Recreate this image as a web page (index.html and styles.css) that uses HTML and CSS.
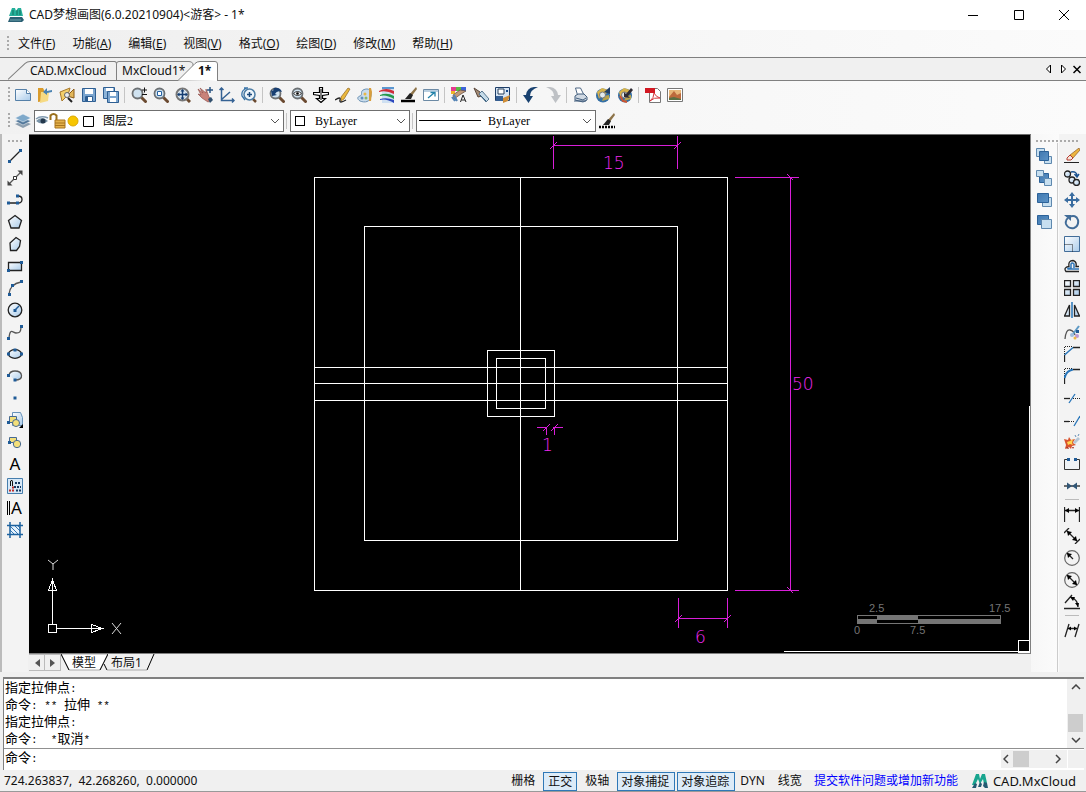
FILE: index.html
```html
<!DOCTYPE html>
<html lang="zh-CN">
<head>
<meta charset="utf-8">
<title>CAD梦想画图</title>
<link rel="stylesheet" href="styles.css">
</head>
<body>
<svg class="defs" aria-hidden="true">
  <defs>
    <linearGradient id="sky" x1="0" y1="0" x2="1" y2="1"><stop offset="0" stop-color="#fff"/><stop offset="1" stop-color="#a9cbea"/></linearGradient>
    <linearGradient id="steel" x1="0" y1="0" x2="1" y2="1"><stop offset="0" stop-color="#4179b0"/><stop offset="1" stop-color="#5c93c7"/></linearGradient>
    <symbol id="mag" viewBox="0 0 16 16"><path d="M10.500 10.500L14.500 14.500" stroke="#6b4a30" stroke-width="3" stroke-linecap="round"/><circle cx="6.500" cy="6.500" r="5" fill="#cfe2f0" stroke="#6d7174" stroke-width="1.800"/></symbol>
    <symbol id="logo" viewBox="0 0 16 16"><path d="M4 1h3l1 5 2-5h3l2 9-3 1-1-5-3 5-2-5-3 6-3 0z" fill="#18a58f"/><path d="M0 15l3-5 2 1-1 4zM6 14l2-5 2 2-1 3zM11 13l1-4 3 1 1 5h-3z" fill="#245a72"/></symbol>
    <symbol id="applogo" viewBox="0 0 16 16"><path d="M4 1h3l1 3 2-3h3l2 8H1z" fill="#25b09b"/><path d="M5 3v5M9 3v5M12 3v5" stroke="#12705f"/><path d="M0 15l2-5h12l2 3-2 2z" fill="#2b6074"/><path d="M2 13h11" stroke="#6fa3ad"/></symbol>
    <symbol id="chev" viewBox="0 0 10 6"><path d="M1 1l4 4 4-4" fill="none" stroke="#555"/></symbol>
    <symbol id="brush" viewBox="0 0 16 16"><path d="M15 0L8 8l2 2L16 2z" fill="#8d7348"/><path d="M9 6l-5 6h6l2-4z" fill="#222"/><path d="M0 14h14" stroke="#000" stroke-width="2.500"/></symbol>
    <symbol id="dashbrush" viewBox="0 0 16 16"><path d="M15 0L8 8l2 2L16 2z" fill="#8d7348"/><path d="M9 6l-5 6h6l2-4z" fill="#222"/><path d="M0 14h16" stroke="#000" stroke-width="2.500" stroke-dasharray="2 1"/></symbol>
    <symbol id="earth" viewBox="0 0 16 16"><circle cx="8" cy="8.500" r="7" fill="#346fa5"/><path d="M2 5l5-4 6 2-2 4-5 1-2 4z" fill="#d7b34a"/><path d="M7 14l2-5 5-1 0 4z" fill="#b8a34b"/><circle cx="7.500" cy="8" r="3" fill="#e3ebee" stroke="#777"/></symbol>
  </defs>
</svg>

<header class="titlebar">
  <svg class="ic"><use href="#applogo"/></svg>
  <h1>CAD梦想画图(6.0.20210904)&lt;游客&gt; - 1*</h1>
  <div class="winbtns">
    <button aria-label="最小化"><svg viewBox="0 0 12 12"><path d="M1 6.500h10"/></svg></button>
    <button aria-label="最大化"><svg viewBox="0 0 12 12"><path d="M1.500 1.500h9v9h-9z"/></svg></button>
    <button aria-label="关闭"><svg viewBox="0 0 12 12"><path d="M1 1l10 10M11 1L1 11"/></svg></button>
  </div>
</header>

<nav class="menubar">
  <span class="grip"></span>
  <button>文件(<u>F</u>)</button><button>功能(<u>A</u>)</button><button>编辑(<u>E</u>)</button><button>视图(<u>V</u>)</button><button>格式(<u>O</u>)</button><button>绘图(<u>D</u>)</button><button>修改(<u>M</u>)</button><button>帮助(<u>H</u>)</button>
</nav>

<div class="doctabs">
  <button class="tab first"><svg viewBox="0 0 108 20" preserveAspectRatio="none"><path d="M0 19.500L17 2.500Q19 .5 22 .5H105.500Q107.500 .5 107.500 3V20"/></svg><span>CAD.MxCloud</span></button>
  <button class="tab second"><svg viewBox="0 0 78 20" preserveAspectRatio="none"><path d="M.5 20V3Q.5 .5 3 .5H73Q76 .5 77 3V20"/></svg><span>MxCloud1*</span></button>
  <button class="tab active"><svg viewBox="0 0 40 20" preserveAspectRatio="none"><path d="M0 19.500L17 2.500Q19 .5 22 .5H37Q39.500 .5 39.500 3V20"/></svg><span>1*</span></button>
  <div class="tabnav">
    <button aria-label="上一个"><svg viewBox="0 0 8 10"><path d="M5.500 1v8l-4-4z" fill="#fff" stroke="#000"/></svg></button>
    <button aria-label="下一个"><svg viewBox="0 0 8 10"><path d="M2.500 1v8l4-4z" fill="#fff" stroke="#000"/></svg></button>
    <button aria-label="关闭标签"><svg viewBox="0 0 8 10"><path d="M.5 2l7 7M7.500 2l-7 7" stroke="#000" stroke-width="1.500"/></svg></button>
  </div>
</div>

<div class="toolbar">
  <span class="grip"></span>
  <button aria-label="新建"><svg class="ic" viewBox="0 0 16 16"><path d="M.5 2.500h11l4 4v7H.5z" fill="url(#sky)" stroke="#5580a8"/><path d="M11.500 2.500v4h4" fill="#fff" stroke="#5580a8"/></svg></button>
  <button aria-label="打开"><svg class="ic" viewBox="0 0 16 16"><path d="M1 1h5l1 2v11l-6 1z" fill="#d99b2b"/><path d="M4 5l8 0-1 9-8 2z" fill="#f6da83"/><path d="M15 3l-5 1V1L6 5l4 3V6l5-1z" fill="#4b83b1"/></svg></button>
  <button aria-label="打开云图"><svg class="ic" viewBox="0 0 16 16"><path d="M1 5l10-4-2 7-6 6z" fill="#f3cf6b" stroke="#a8782a"/><path d="M8 9l7-7v9z" fill="#e2b75b" stroke="#8b5b19"/><circle cx="8" cy="8" r="2.500" fill="#eee" stroke="#666"/><path d="M9 11l4 4" stroke="#222" stroke-width="2"/></svg></button>
  <button aria-label="保存"><svg class="ic" viewBox="0 0 16 16"><path d="M1.500 1.500h13v13h-13z" fill="#7ba5cf" stroke="#2e5f93"/><path d="M4 2h8v5H4z" fill="#fff"/><path d="M4.500 9.500h7v5h-7z" fill="#fff" stroke="#2e5f93"/><path d="M6 10v4" stroke="#2e5f93" stroke-width="2"/></svg></button>
  <button aria-label="另存为"><svg class="ic" viewBox="0 0 16 16"><path d="M.5.5h11v11H.5z" fill="#8cb3d8" stroke="#2e5f93"/><path d="M3 1h7v3H3z" fill="#fff"/><path d="M4.500 4.500h11v11h-11z" fill="#7ba5cf" stroke="#2e5f93"/><path d="M7 5h6v4H7zM7 11h6v4H7z" fill="#fff"/></svg></button>
  <span class="sep"></span>
  <button aria-label="实时缩放"><svg class="ic" viewBox="0 0 16 16"><use href="#mag"/><path d="M11 3h5M13.500.5v5M11 7.500h5" stroke="#111"/></svg></button>
  <button aria-label="窗口缩放"><svg class="ic" viewBox="0 0 16 16"><use href="#mag"/><path d="M4.500 4.500h4v4h-4z" fill="#fff" stroke="#2763a2"/></svg></button>
  <button aria-label="范围缩放"><svg class="ic" viewBox="0 0 16 16"><path d="M11 11l4 4" stroke="#6b4a30" stroke-width="3"/><circle cx="7.500" cy="7.500" r="6" fill="#dce9f3" stroke="#777" stroke-width="2"/><path d="M3 7.500h9M7.500 3v9" stroke="#163e72" stroke-width="1.500"/><path d="M7.500 2l2 2.500h-4zM7.500 13l2-2.500h-4zM2 7.500l2.500-2v4zM13 7.500l-2.500-2v4z" fill="#163e72"/></svg></button>
  <button aria-label="平移"><svg class="ic" viewBox="0 0 16 16"><path d="M1 2l5 4-3-5 6 5V2l3 8 3 3-4 2-6-4-4-4 3 1z" fill="#c98279" stroke="#93534e" stroke-width=".7"/><path d="M10 3h6M13 0v6" stroke="#2b5583" stroke-width="1.500"/><path d="M11 12l3-2 2 3-3 3z" fill="#32506e"/></svg></button>
  <button aria-label="坐标系"><svg class="ic" viewBox="0 0 16 16"><path d="M2.500 1v12.500H15M2 13L11 5M.5 3l2-2 2 2M13 11.500l2 2-2 2" fill="none" stroke="#356294" stroke-width="1.500"/></svg></button>
  <button aria-label="放大"><svg class="ic" viewBox="0 0 16 16"><path d="M6 1Q0 3 1 9l3 4M3 1h4" stroke="#3773a8" fill="none" stroke-width="1.300"/><path d="M12 12l3 3" stroke="#6b4a30" stroke-width="2.500"/><circle cx="8.500" cy="7.500" r="5.500" fill="#edf5fb" stroke="#4d7da5" stroke-width="1.500"/><path d="M6 7.500h5M8.500 5v5" stroke="#1b4a7d" stroke-width="1.500"/></svg></button>
  <span class="sep"></span>
  <button aria-label="上一视图"><svg class="ic" viewBox="0 0 16 16"><use href="#mag"/><path d="M2 3l1 6 5-1-2-1q2-4 7-2-2-5-8-4L4 4z" fill="#183f72"/></svg></button>
  <button aria-label="查看"><svg class="ic" viewBox="0 0 16 16"><use href="#mag"/><path d="M2.500 6.500q4-4 8 0-4 4-8 0z" fill="#fff" stroke="#333"/><circle cx="6.500" cy="6.500" r="1.300"/></svg></button>
  <button aria-label="移动视图"><svg class="ic" viewBox="0 0 16 16"><path d="M6.500.500h3v5h6v2l-6 1v3h3L8 15.500l-4.500-4h3v-3l-6-1v-2h6z" fill="#fff" stroke="#000" stroke-width="1.200"/><path d="M8 2v11" stroke="#000"/></svg></button>
  <button aria-label="画笔"><svg class="ic" viewBox="0 0 16 16"><path d="M13 1l2 1-6 10-3 2 0-4z" fill="#eab83d" stroke="#8f6624" stroke-width=".7"/><path d="M0 13q6-4 5 0t6 0" fill="none" stroke="#222" stroke-width="1.300"/></svg></button>
  <button aria-label="调色板"><svg class="ic" viewBox="0 0 16 16"><path d="M6 3c6-3 9 1 8 6-1 6-6 7-11 5-3-2-3-4 0-5s0-4 3-6z" fill="#c9dcec" stroke="#6d93b5"/><circle cx="5" cy="11" r="1.500" fill="#5f8ec0"/><circle cx="8" cy="7" r="1.500" fill="#e9b746"/><circle cx="9" cy="11" r="1.500" fill="#8ab867"/><path d="M12 1h2l1 4-1 9h-2z" fill="#d89e3d"/></svg></button>
  <button aria-label="颜色"><svg class="ic" viewBox="0 0 16 16"><path d="M3 0h12v16H3z" fill="#cfe0f2"/><path d="M0 4q7-4 15 0v3Q7 3 0 5z" fill="#cf2d39"/><path d="M1 8q7-3 14 1v3Q7 7 1 9z" fill="#24984b"/><path d="M1 12q7-2 14 1v3Q7 11 1 13z" fill="#2b46bd"/><path d="M3 0h12v2H3z" fill="#5b97d0"/></svg></button>
  <button aria-label="线型"><svg class="ic"><use href="#brush"/></svg></button>
  <button aria-label="外部参照"><svg class="ic" viewBox="0 0 16 16"><path d="M.5 2.500h15v11H.5z" fill="#fff" stroke="#6c8aa5"/><path d="M1 3h14v2H1z" fill="#b9cfe1"/><path d="M5 11l6-5M7.500 5.500H12v4" stroke="#2282aa" stroke-width="1.300" fill="none"/></svg></button>
  <span class="sep"></span>
  <button aria-label="特性"><svg class="ic" viewBox="0 0 16 16"><path d="M0 0h5v4H0z" fill="#e43b8f"/><path d="M5 0h5v4H5z" fill="#57bd42"/><path d="M10 0h5v4h-5z" fill="#3b63d9"/><path d="M0 4h4v3H0z" fill="#efb528"/><path d="M2 8l7-5 6 1-5 3-7 5z" fill="#c19a79" stroke="#5d4a40" stroke-width=".7"/><path d="M1 10l3 4M3 8l3 6" stroke="#5383b5" stroke-width="2"/><path d="M9.500 15L12 8l3 7M10.500 13h3.500" fill="none" stroke="#222"/></svg></button>
  <button aria-label="测量"><svg class="ic" viewBox="0 0 16 16"><path d="M1 1l6 4 2 4-4 1z" fill="#a28b76" stroke="#594639"/><path d="M6 7l3-3 7 8-3 3z" fill="#c6dbe8" stroke="#55758f"/><path d="M7 8l6 6" stroke="#345c7d"/></svg></button>
  <button aria-label="块"><svg class="ic" viewBox="0 0 16 16"><path d="M.5.500h14v13H.5z" fill="#d6e5f4" stroke="#1e3e68"/><path d="M3 2h6v5H3z" fill="#fff" stroke="#29415c"/><path d="M11 3h2v2h-2z" fill="#154889"/><path d="M1 9h7v5H1z" fill="#355f93"/><path d="M8 11l7-3-2 6-5 2z" fill="#cf8e38"/></svg></button>
  <span class="sep"></span>
  <button aria-label="撤销"><svg class="ic" viewBox="0 0 16 16"><path d="M15 0Q4-1 3 8H0l5.500 8L10 9H7q0-6 8-9z" fill="#194270"/></svg></button>
  <button aria-label="重做"><svg class="ic" viewBox="0 0 16 16"><path d="M1 0q11-1 12 8h3l-5.500 8L6 9h3Q9 3 1 0z" fill="#bec1c5"/></svg></button>
  <span class="sep"></span>
  <button aria-label="打印"><svg class="ic" viewBox="0 0 16 16"><path d="M4.500 8l-2-7h5l3 6" fill="#fff" stroke="#4e6784"/><path d="M2 9l3-2h6l3 3v3l-4 2-8-2z" fill="#d0d9e3" stroke="#415d7c"/><path d="M3 11l7 2 3-2M1 14h12" fill="none" stroke="#415d7c"/></svg></button>
  <button aria-label="上传"><svg class="ic" viewBox="0 0 16 16"><use href="#earth"/><path d="M9 5l6-5v7z" fill="#203e66"/></svg></button>
  <button aria-label="下载"><svg class="ic" viewBox="0 0 16 16"><use href="#earth"/><path d="M7 10V5l2 2 5-6 2 2-5 6 2 2z" fill="#302c35"/><path d="M3 9l3 5 4 1" stroke="#ce5430" stroke-width="2" fill="none"/></svg></button>
  <span class="sep"></span>
  <button aria-label="输出 PDF"><svg class="ic" viewBox="0 0 16 16"><path d="M4.500 1.500h8l3 3v11h-11z" fill="#fff" stroke="#777"/><path d="M0 1h10v5H0z" fill="#d21822"/><path d="M9 6q0 5-4 8 4-4 10-3-4-1-6-5" fill="none" stroke="#d5353c"/></svg></button>
  <button aria-label="输出图片"><svg class="ic" viewBox="0 0 16 16"><path d="M.5 1.500h15v13H.5z" fill="#fff" stroke="#777"/><path d="M2 3h12v10H2z" fill="#e8b779"/><path d="M2 10l5-6 3 4 4-2v7H2z" fill="#bd6a3c"/><path d="M2 11l5-1 7 2v1H2z" fill="#5b7042"/></svg></button>
</div>

<div class="toolbar props">
  <span class="grip"></span>
  <button aria-label="图层"><svg class="ic" viewBox="0 0 16 16"><path d="M0 11l8-3 8 3-8 4z" fill="#8a9dae"/><path d="M0 8l8-3 8 3-8 4z" fill="#52789b" stroke="#fff" stroke-width=".5"/><path d="M0 5l8-4 8 4-8 4z" fill="#7fa9ca" stroke="#fff" stroke-width=".5"/></svg></button>
  <div class="combo layer">
    <svg class="state" viewBox="0 0 60 16"><path d="M1 8q6-6 12 0-6 5-12 0z" fill="#7a94a8"/><circle cx="8" cy="8" r="2.500" fill="#24384c"/><path d="M1 6q5-4 12-1" fill="none" stroke="#829bb0" stroke-width="1.500"/><path d="M15.500 7V2.500q3-3 6 0V7" fill="none" stroke="#9a6f1c" stroke-width="2"/><path d="M20 7h10v8H20z" fill="#e4b14b" stroke="#a8741e"/><path d="M20 10h10M20 12.500h10" stroke="#a8741e"/><circle cx="38" cy="8" r="5" fill="#f7c500" stroke="#dca900"/><path d="M48.500 3.500h10v10h-10z" fill="#fff" stroke="#000"/></svg>
    <select aria-label="图层"><option>图层2</option></select><svg class="chev"><use href="#chev"/></svg>
  </div>
  <span class="sep"></span>
  <div class="combo color"><i class="swatch"></i><select aria-label="颜色"><option>ByLayer</option></select><svg class="chev"><use href="#chev"/></svg></div>
  <span class="sep"></span>
  <div class="combo line"><i class="stroke"></i><select aria-label="线型"><option>ByLayer</option></select><svg class="chev"><use href="#chev"/></svg></div>
  <button aria-label="线宽"><svg class="ic"><use href="#dashbrush"/></svg></button>
</div>

<main class="work">
  <aside class="tools">
    <span class="hgrip"></span>
    <button aria-label="直线"><svg class="ic" viewBox="0 0 16 16"><path d="M2 14L14 2" class="k2"/><path d="M1 12h3v3H1zM12 1h3v3h-3z" class="pt"/></svg></button>
    <button aria-label="构造线"><svg class="ic" viewBox="0 0 16 16"><path d="M2 14L14 2" class="g"/><path d="M15.500.500v5l-5-5zM.5 15.500v-5l5 5z" fill="#444"/><path d="M6.500 6.500h3v3h-3z" fill="#fff" stroke="#333"/></svg></button>
    <button aria-label="多段线"><svg class="ic" viewBox="0 0 16 16"><path d="M1 11h10q4 0 4-3.500T11 4" class="k2"/><path d="M0 9.500h3v3H0zM9 9.500h3v3H9zM9 2.500h3v3H9z" class="pt"/></svg></button>
    <button aria-label="正多边形"><svg class="ic" viewBox="0 0 16 16"><path d="M8 1.500l6.500 5L12 14H4L1.500 6.500z" class="shape"/></svg></button>
    <button aria-label="多边形"><svg class="ic" viewBox="0 0 16 16"><path d="M9 1.500l4.500 3-1 6-3 4h-6L3 7z" class="shape"/></svg></button>
    <button aria-label="矩形"><svg class="ic" viewBox="0 0 16 16"><path d="M1.500 4.500h13v8h-13z" class="shape"/><path d="M0 11h3v3H0zM13 3h3v3h-3z" class="pt"/></svg></button>
    <button aria-label="圆弧"><svg class="ic" viewBox="0 0 16 16"><path d="M2 14Q3 4 14 2" class="k2 g"/><path d="M1 13h3v3H1zM4 4h3v3H4zM13 0h3v3h-3z" class="pt"/></svg></button>
    <button aria-label="圆"><svg class="ic" viewBox="0 0 16 16"><circle cx="8" cy="8" r="6.800" class="shape"/><path d="M8 8l4-4" stroke="#1f5b97" stroke-width="1.500"/><path d="M6.500 7h3v3h-3z" class="pt"/></svg></button>
    <button aria-label="样条曲线"><svg class="ic" viewBox="0 0 16 16"><path d="M2 14C3 3 6 9 9 9s5 0 5-7" class="k2 g"/><path d="M0 13h3v3H0zM13 1h3v3h-3z" class="pt"/></svg></button>
    <button aria-label="椭圆"><svg class="ic" viewBox="0 0 16 16"><ellipse cx="8" cy="8" rx="6.500" ry="4.300" class="shape"/><path d="M0 6.500h3v3H0zM13 6.500h3v3h-3zM6.500 2.500h3v3h-3z" class="pt"/></svg></button>
    <button aria-label="椭圆弧"><svg class="ic" viewBox="0 0 16 16"><path d="M2 7q1-4 6-4 6 0 6.500 4.500T8 12" class="shape soft"/><path d="M0 6h3v3H0zM6.500 10.500h3v3h-3z" class="pt"/></svg></button>
    <button aria-label="点"><svg class="ic" viewBox="0 0 16 16"><path d="M6.500 6.500h3v3h-3z" class="pt"/></svg></button>
    <button aria-label="创建块"><svg class="ic" viewBox="0 0 16 16"><path d="M5.500.5h8l2 5v8h-10z" fill="url(#sky)" stroke="#6792b9"/><path d="M2.500 4.500h7v6h-7z" class="yel"/><circle cx="9" cy="11" r="3.500" class="yel"/><path d="M0 9h3v3H0z" class="pt"/><path d="M16 12v4h-4z"/></svg></button>
    <button aria-label="插入块"><svg class="ic" viewBox="0 0 16 16"><path d="M2.500 3.500h7v5h-7z" class="yel"/><circle cx="10" cy="10" r="3.700" class="yel"/><path d="M1 7h3v3H1z" class="pt"/></svg></button>
    <button class="letter" aria-label="单行文字">A</button>
    <button aria-label="表格"><svg class="ic" viewBox="0 0 16 16"><path d="M.5.500h15v15H.5z" fill="#d7e8f7" stroke="#477ead"/><path d="M3.500 8V3q2-2 2 1v4" fill="none" stroke="#111"/><path d="M8 5h5M7 9h7M9 12.500h5" stroke="#173a64" stroke-width="2" stroke-dasharray="2 1"/><path d="M2 12.500h6M5 9.500h3" stroke="#c42c29" stroke-width="2" stroke-dasharray="2 1"/></svg></button>
    <button class="letter mtext" aria-label="多行文字">A</button>
    <button aria-label="填充"><svg class="ic" viewBox="0 0 16 16"><path d="M3 3h10v10H3z" fill="#e6f2fc"/><path d="M3 4l9 9M3 8l5 5M7 3l6 6M3 12l1 1M10 3l3 3" stroke="#3478b5"/><path d="M0 3.500h16M0 12.500h16M3 0v16M13 0v16" stroke="#1c629f" stroke-width="1.500"/></svg></button>
  </aside>

  <section class="center">
    <svg class="drawing" viewBox="29 135 1001 518" role="img" aria-label="图纸">
      <g class="ln">
        <path d="M314.500 177.500h413v413h-413zM364.500 226.500h313v314h-313zM487.500 350.500h67v66h-67zM496.500 358.500h49v50h-49zM520.500 177v413M314 367.500h413M314 383.500h413M314 400.500h413M784 651.500h246M1029.500 406v247M1018.500 640.500h11v12h-11z"/>
        <path d="M48.500 624.500h8v8h-8zM52.500 624V579M57 628.500h45M48.500 590.500h8l-4-11zM91.500 624.500v8l11-4z"/>
      </g>
      <path class="axis" d="M48 560l5 4 5-4M53 564v6M112 623l9 11M121 623l-9 11"/>
      <path class="dim" d="M553.500 136v33M677.500 136v33M553 145.500h124M735 177.500h64M735 590.500h64M790.500 177v413M678.500 598v30M727.500 598v30M678 618.500h50M537 427.500h10M553 427.500h10M546.500 427v8M554.500 427v8"/>
      <path class="tick" d="M550 149l7-7M674 149l7-7M787 174l6 6M787 587l6 6M675 622l7-7M724 622l7-7M543 431l7-7M551 431l7-7"/>
      <g class="dimtext"><text x="603" y="169">15</text><text x="792" y="390">50</text><text x="695" y="643">6</text><text x="542" y="451">1</text></g>
      <path class="bar" d="M857 615h144v9H857z"/><path d="M858 616h19v3h-19zM918 616h82v3h-82zM877 620h41v3h-41z"/>
      <g class="scale"><text x="869" y="612">2.5</text><text x="989" y="612">17.5</text><text x="854" y="634">0</text><text x="910" y="634">7.5</text></g>
    </svg>
    <div class="sheets">
      <button class="arrow" aria-label="左"><svg viewBox="0 0 8 10"><path d="M7 1v8L2 5z"/></svg></button><button class="arrow" aria-label="右"><svg viewBox="0 0 8 10"><path d="M1 1v8l5-4z"/></svg></button>
      <button class="sheet on"><svg viewBox="0 0 47 17" preserveAspectRatio="none"><path class="fill" d="M0 0l8 16h31L47 0z"/><path d="M0 0l8 16M39 16L47 0"/></svg><span>模型</span></button>
      <button class="sheet"><svg viewBox="0 0 53 17" preserveAspectRatio="none"><path d="M3 10l3 6M46 16L53 0"/><path class="base" d="M6 16h40"/></svg><span>布局1</span></button>
    </div>
  </section>

  <aside class="right">
    <span class="hgrip"></span>
    <div class="cols">
      <div class="col order">
        <button aria-label="前置"><svg class="ic" viewBox="0 0 16 16"><path d="M.5.5h8v8h-8zM8.500 8.500h7v7h-7z" class="pale"/><path d="M3.500 3.500h9v9h-9z" class="deep"/></svg></button>
        <button aria-label="置于对象上"><svg class="ic" viewBox="0 0 16 16"><path d="M3.500 3.500h9v9h-9z" class="deep"/><path d="M.5.5h7v6h-7zM8.500 8.500h7v7h-7z" class="pale"/></svg></button>
        <button aria-label="置于对象下"><svg class="ic" viewBox="0 0 16 16"><path d="M6.500 5.500h9v9h-9z" class="pale"/><path d="M1.500 1.500h11v9h-11z" class="deep"/></svg></button>
        <button aria-label="后置"><svg class="ic" viewBox="0 0 16 16"><path d="M1.500 1.500h11v9h-11z" class="deep"/><path d="M5.500 5.500h10v9h-10z" class="pale"/></svg></button>
      </div>
      <div class="col edit">
        <button aria-label="删除"><svg class="ic" viewBox="0 0 16 16"><path d="M15 0l1 2-7 8-3-3z" fill="#edb43f" stroke="#8a5a25" stroke-width=".7"/><path d="M6 7l3 3-2 2H3v-2z" fill="#f3e6dc" stroke="#b73c31"/><path d="M0 14.500h15" stroke="#222"/></svg></button>
        <button aria-label="复制"><svg class="ic" viewBox="0 0 16 16"><g class="shape"><circle cx="3.500" cy="4" r="3"/><circle cx="8" cy="10" r="3"/><circle cx="12.500" cy="12.500" r="3"/></g><path d="M7 2q6-1 6 4M10.500 4l2.500 3 2-3" fill="none" stroke="#1c5390" stroke-width="1.500"/></svg></button>
        <button aria-label="移动"><svg class="ic" viewBox="0 0 16 16"><path d="M8 0l3 4H9v3h3V5l4 3-4 3V9H9v3h2l-3 4-3-4h2V9H4v2L0 8l4-3v2h3V4H5z" fill="#386ca0"/></svg></button>
        <button aria-label="旋转"><svg class="ic" viewBox="0 0 16 16"><path d="M5 3q7-3 9 3 1 6-4 8-6 1-8-4-1-4 2-6" fill="none" stroke="#416c98" stroke-width="2"/><path d="M0 1h7v6z" fill="#416c98"/></svg></button>
        <button aria-label="缩放"><svg class="ic" viewBox="0 0 16 16"><path d="M.5.500h15v15H.5z" fill="url(#sky)" stroke="#426d99"/><path d="M.5 8.500h8v7" class="dash"/></svg></button>
        <button aria-label="偏移"><svg class="ic" viewBox="0 0 16 16"><path d="M15 13.500H2q-3-4 3-5-1-6 4-6 4 1 3 6h3" class="k2"/><path d="M15 11H4q-1-1 3-1V6q1-2 3 0v4" fill="none" stroke="#2f76b8" stroke-width="1.500"/></svg></button>
        <button aria-label="阵列"><svg class="ic" viewBox="0 0 16 16"><path d="M.5.500h6v6h-6zM9.500.500h6v6h-6zM.5 9.500h6v6h-6zM9.500 9.500h6v6h-6z" class="shape"/></svg></button>
        <button aria-label="镜像"><svg class="ic" viewBox="0 0 16 16"><path d="M5.500 3v11h-5zM10.500 3v11h5z" class="shape"/><path d="M8 0v16" stroke="#2475b7" stroke-width="1.500"/></svg></button>
        <button aria-label="编辑曲线"><svg class="ic" viewBox="0 0 16 16"><path d="M1 15Q2 5 6 6t5 5" class="k2 g"/><path d="M15 2l-6 8" stroke="#5e9ac5" stroke-width="2"/><path d="M12 6h3v3h-3z" class="pt"/><circle cx="8" cy="11" r="2" fill="#9fbede"/><circle cx="13" cy="12" r="2" fill="#bd9ad5"/><circle cx="11" cy="14" r="1.500" fill="#ecb948"/></svg></button>
        <button aria-label="倒角"><svg class="ic" viewBox="0 0 16 16"><path d="M.5 8V.5H9" class="dash"/><path d="M.5 16V9M9 1.500h7" class="k2"/><path d="M.5 9L9 1.500" stroke="#2775b9" stroke-width="1.500"/></svg></button>
        <button aria-label="圆角"><svg class="ic" viewBox="0 0 16 16"><path d="M.5 8V.5H9" class="dash"/><path d="M.5 16V9M9 1.500h7" class="k2"/><path d="M.5 10Q2 3 9 1.500" fill="none" stroke="#2775b9" stroke-width="2"/></svg></button>
        <button aria-label="修剪"><svg class="ic" viewBox="0 0 16 16"><path d="M0 8.500h6" class="k2"/><path d="M9 8.500h7" class="dash"/><path d="M5 13l6-9" stroke="#2775b9" stroke-width="1.300"/></svg></button>
        <button aria-label="延伸"><svg class="ic" viewBox="0 0 16 16"><path d="M0 9.500h5" class="k2"/><path d="M5 9.500h6" class="dash"/><path d="M10 14l6-10" stroke="#2775b9" stroke-width="1.300"/></svg></button>
        <button aria-label="分解"><svg class="ic" viewBox="0 0 16 16"><path d="M0 5l4 1 1-3 2 3 4-1-2 4 3 2-4 1-1 3-2-2-4 2 1-4z" fill="#d9532e"/><path d="M3 8l3-1 3-2-1 4 1 2-3-1-2 1z" fill="#ffd44f"/><path d="M9 8l5-5 2 2-5 5z" fill="#b4c6d5"/><path d="M1 14l3-1 1 2zM8 13l2 0-1 2z" fill="#a32a1c"/><path d="M11 1l1 2M15 0l-1 2" stroke="#648eb5"/></svg></button>
        <button aria-label="打断"><svg class="ic" viewBox="0 0 16 16"><path d="M4 3.500H.5v10h15v-10H12" fill="#eef2f5" stroke="#333"/><path d="M3 2h3v3H3zM10 2h3v3h-3z" class="pt"/></svg></button>
        <button aria-label="合并"><svg class="ic" viewBox="0 0 16 16"><path d="M0 8h16" class="k2"/><path d="M3 4.500L8 8l-5 3.500zM13 4.500L8 8l5 3.500z" fill="#315676"/></svg></button>
        <span class="hsep"></span>
        <button aria-label="线性标注"><svg class="ic" viewBox="0 0 16 16"><path d="M.5 1v15M15.500 1v15M1 4.500h14" class="k2"/><path d="M1 4.500l4-2.500v5zM15 4.500l-4-2.500v5z"/></svg></button>
        <button aria-label="对齐标注"><svg class="ic" viewBox="0 0 16 16"><path d="M0 5l5-5M11 16l5-5M3 3l10 10" class="k2"/><path d="M3 3l5 1-4 4zM13 13l-5-1 4-4z"/></svg></button>
        <button aria-label="半径标注"><svg class="ic" viewBox="0 0 16 16"><circle cx="8" cy="8" r="7.300" class="ring"/><path d="M3 3l6 6" class="k2"/><path d="M3 3l5 1-4 4z"/></svg></button>
        <button aria-label="直径标注"><svg class="ic" viewBox="0 0 16 16"><circle cx="8" cy="8" r="7.300" class="ring"/><path d="M3 3l10 10" class="k2"/><path d="M3 3l5 1-4 4zM13 13l-5-1 4-4z"/></svg></button>
        <button aria-label="角度标注"><svg class="ic" viewBox="0 0 16 16"><path d="M0 14.500h16M1 9l7-8M7 3q7 3 7 10" class="k2"/><path d="M6 3l5 0-2 4zM14 13l-3-4h4z"/></svg></button>
        <span class="hsep"></span>
        <button aria-label="编辑标注"><svg class="ic" viewBox="0 0 16 16"><path d="M1 15L5 2M11 15l4-13M4 6.500h9" class="k2"/><path d="M4 6.500l3-2v4zM13 6.500l-3-2v4z"/></svg></button>
      </div>
    </div>
  </aside>
</main>

<section class="command">
  <div class="history">
    <div class="log">
      <p>指定拉伸点<i>:</i></p><p>命令<i>: ** </i>拉伸<i> **</i></p><p>指定拉伸点<i>:</i></p><p>命令<i>:  *</i>取消<i>*</i></p>
    </div>
    <div class="vscroll"><svg viewBox="0 0 10 6"><path d="M1 5l4-4 4 4"/></svg><span></span><svg viewBox="0 0 10 6"><path d="M1 1l4 4 4-4"/></svg></div>
  </div>
  <div class="prompt">
    <label for="cmd">命令<i>:</i></label><input id="cmd" type="text">
    <div class="hscroll"><svg viewBox="0 0 6 10"><path d="M5 1L1 5l4 4"/></svg><span></span><svg viewBox="0 0 6 10"><path d="M1 1l4 4-4 4"/></svg></div>
    <div class="corner"></div>
  </div>
</section>

<footer class="status">
  <output>724.263837,  42.268260,  0.000000</output>
  <button>栅格</button><button class="on">正交</button><button>极轴</button><button class="on wide">对象捕捉</button><button class="on wide">对象追踪</button><button class="dyn">DYN</button><button class="lw">线宽</button>
  <a href="#">提交软件问题或增加新功能</a>
  <svg class="ic"><use href="#logo"/></svg><strong>CAD.MxCloud</strong>
</footer>
</body>
</html>
```
FILE: styles.css
```css
* { box-sizing: border-box; }
html, body { height: 100%; margin: 0; }
body {
  display: flex; flex-direction: column; overflow: hidden;
  background: #f0f0f0; color: #111;
  font: 12px/16px "Noto Sans", "Noto Sans CJK SC", sans-serif;
}
button { margin: 0; padding: 0; border: 0; background: none; color: inherit; font: inherit; }
i { font-style: normal; }
svg { display: block; flex: none; }
.defs { position: absolute; width: 0; height: 0; }
.ic { width: 16px; height: 16px; }
.grip { width: 3px; height: 16px; margin: 0 1px 0 8px; flex: none; background: repeating-linear-gradient(#aaa 0 2px, transparent 2px 4px) 0 0 / 2px 100% no-repeat; }
.hgrip { height: 2px; flex: none; background: repeating-linear-gradient(90deg, #aaa 0 2px, transparent 2px 4px); }

.titlebar { display: flex; align-items: center; height: 30px; flex: none; background: #fff; padding-left: 8px; gap: 5px; }
.titlebar h1 { margin: 0; font-size: 12px; font-weight: 400; flex: 1; }
.winbtns { display: flex; }
.winbtns button { width: 46px; height: 30px; display: grid; place-items: center; }
.winbtns button:last-child { width: 44px; }
.winbtns svg { width: 12px; height: 12px; fill: none; stroke: #000; }

.menubar { display: flex; align-items: center; height: 27px; flex: none; background: linear-gradient(90deg, #efefef, #fbfbfb); }
.menubar button { padding: 0 8px; margin-right: 1px; }
.menubar .grip { margin: 0 0 0 7px; }

.doctabs { display: flex; align-items: flex-end; height: 24px; flex: none; border-top: 1px solid #808080; background: linear-gradient(#808080, #808080) 0 100% / 100% 1px no-repeat #f0f0f0; padding-left: 8px; }
.tab { position: relative; height: 20px; text-align: left; }
.tab svg { position: absolute; inset: 0; width: 100%; height: 100%; fill: #f0f0f0; stroke: #808080; }
.tab span { position: relative; }
.tab.first { width: 109px; padding-left: 22px; }
.tab.second { width: 78px; margin-left: -1px; padding-left: 6px; }
.tab.active { width: 40px; margin-left: -16px; padding-left: 20px; font-weight: 700; }
.tab.first svg, .tab.second svg { border-bottom: 1px solid #808080; }
.tab.active svg { fill: #fff; }
.tabnav { display: flex; margin-left: auto; padding-right: 2px; height: 24px; align-items: center; }
.tabnav button { width: 14px; display: grid; place-items: center; }
.tabnav svg { width: 8px; height: 10px; }

.toolbar { display: flex; align-items: center; height: 28px; flex: none; background: linear-gradient(90deg, #f1f1f1, #fbfbfb); }
.toolbar button { width: 22px; height: 22px; display: grid; place-items: center; flex: none; }
.sep { width: 2px; height: 16px; margin: 0 2px; border-left: 1px solid #c4c4c4; flex: none; }
.props { height: 25px; padding-bottom: 2px; }
.combo { display: flex; align-items: center; position: relative; height: 22px; background: #fff; border: 1px solid #6f6f6f; }
.combo select { flex: 1; min-width: 0; height: 20px; border: 0; background: transparent; appearance: none; color: #000; font: 12px/16px "Liberation Serif", "Noto Sans CJK SC", serif; padding: 0; outline: 0; }
.combo .chev { position: absolute; right: 3px; top: 7px; width: 10px; height: 6px; pointer-events: none; }
.layer { width: 250px; gap: 8px; }
.state { width: 60px; height: 16px; }
.color { width: 120px; padding-left: 4px; gap: 10px; }
.swatch { width: 10px; height: 10px; border: 1px solid #000; }
.line { width: 180px; padding-left: 2px; gap: 7px; }
.stroke { width: 62px; height: 1px; background: #000; }

.work { flex: 1; min-height: 0; display: flex; }
.tools { width: 28px; flex: none; display: flex; flex-direction: column; align-items: center; padding-top: 6px; border-left: 2px solid #bbb; background: #f3f3f3; }
.tools .hgrip { width: 14px; margin-bottom: 3px; }
.tools button, .col button { width: 22px; height: 22px; flex: none; display: grid; place-items: center; }
.tools .letter { font-size: 17px; line-height: 20px; color: #000; }
.tools .mtext { width: 16px; border-left: 3px double #000; height: 14px; margin: 4px 0; line-height: 14px; }
.k2 { fill: none; stroke: #222; stroke-width: 1.3; }
.g { fill: none; stroke: #555; stroke-width: 1.3; }
.pt { fill: #1f5b97; }
.shape { fill: url(#sky); stroke: #222; stroke-width: 1.3; }
.soft { stroke: #555; }
.yel { fill: #f3df79; stroke: #476a92; }
.pale { fill: #c7dff0; stroke: #5e88ae; }
.deep { fill: url(#steel); stroke: #2c6299; }
.dash { fill: none; stroke: #222; stroke-dasharray: 1 1; }
.ring { fill: none; stroke: #666; stroke-width: 1.2; }

.center { flex: 1; min-width: 0; display: flex; flex-direction: column; padding-left: 1px; }
.drawing { flex: 1; min-height: 0; width: 100%; background: #000; border-right: 1px solid #808080; border-top: 1px solid #6c6c6c; border-bottom: 1px solid #808080; }
.ln { fill: none; stroke: #fff; shape-rendering: crispEdges; }
.axis { fill: none; stroke: #ddd; }
.dim { fill: none; stroke: #d81ed8; shape-rendering: crispEdges; }
.tick { stroke: #d81ed8; }
.dimtext { fill: #f028f0; font: 200 17px "DejaVu Sans", sans-serif; }
.bar { fill: #757575; }
.scale { fill: #757575; font: 11px "Liberation Sans", sans-serif; }
.sheets { display: flex; height: 18px; flex: none; }
.sheet { position: relative; height: 17px; text-align: left; }
.sheet svg { position: absolute; inset: 0; width: 100%; height: 100%; fill: none; stroke: #000; }
.sheet .fill { fill: #fff; stroke: #aaa; }
.sheet .base { stroke: #aaa; }
.sheet span { position: relative; }
.sheet.on { width: 47px; padding-left: 11px; }
.sheet + .sheet { width: 53px; margin-left: -7px; padding-left: 10px; }
.sheet + .sheet svg { overflow: visible; }
.arrow { width: 16px; height: 17px; border: 1px solid #bbb; border-left-width: 0; display: grid; place-items: center; }
.arrow svg { width: 8px; height: 10px; fill: #555; }

.right { width: 55px; flex: none; display: flex; flex-direction: column; padding-top: 6px; background: linear-gradient(90deg, #f7f7f7, #fbfbfb 50%, #f3f3f3 52%); }
.right .hgrip { margin: 0 7px 1px 5px; }
.cols { flex: 1; display: flex; }
.col { display: flex; flex-direction: column; align-items: center; padding-top: 2px; }
.order { width: 27px; border-right: 1px solid #ccc; }
.edit { flex: 1; }
.hsep { width: 14px; height: 1px; margin: 2px 0 3px; background: #bbb; }

.command { flex: none; margin: 5px 2px 0 3px; border: solid #808080; border-width: 2px 0 0 1px; background: #fff; color: #000; font: 13px/17px "Noto Sans CJK SC", sans-serif; }
.command i { font: 11px/13px "Liberation Mono", monospace; white-space: pre; }
.history { display: flex; border-bottom: 1px solid #909090; }
.log { flex: 1; padding: 0 1px 1px; line-height: 15px; }
.log p { margin: 0; height: 17px; }
.vscroll { width: 17px; display: flex; flex-direction: column; align-items: center; background: #f0f0f0; padding: 5px 0; }
.vscroll svg { width: 10px; height: 6px; }
.vscroll span { width: 15px; height: 18px; margin: auto 0 5px; background: #cdcdcd; }
.command svg { fill: none; stroke: #444; stroke-width: 1.5; }
.prompt { display: flex; height: 21px; align-items: flex-start; }
.prompt label { padding-left: 1px; line-height: 15px; }
.prompt input { flex: 1; min-width: 0; height: 18px; border: 0; outline: 0; padding: 0 4px; background: transparent; font: inherit; }
.hscroll { width: 66px; height: 18px; margin-top: 1px; display: flex; align-items: center; background: #f0f0f0; padding: 0 6px 0 2px; gap: 4px; }
.hscroll svg { width: 6px; height: 10px; }
.hscroll span { width: 16px; height: 16px; background: #cdcdcd; margin-right: auto; }
.corner { width: 17px; height: 18px; margin-top: 1px; background: #f0f0f0; border-left: 1px solid #fff; }

.status { flex: none; display: flex; align-items: center; height: 22px; padding: 1px 10px 0 4px; border-bottom: 1px solid #999; }
.status output { flex: 1; white-space: pre; }
.status button { height: 19px; padding: 0 4px; margin: 0 3px; white-space: nowrap; }
.status .on { border: 1px solid #2f78b7; background: #dcebf8; width: 34px; padding: 0 3px; margin: 0 1px; line-height: 17px; }
.status .wide { width: 58px; text-align: left; }
.status .dyn { margin: 0 2px 0 0; }
.status .lw { margin: 0 8px 0 3px; }
.status a { color: #00f; text-decoration: none; margin-right: 14px; white-space: nowrap; }
.status strong { font-size: 13px; font-weight: 400; margin-left: 5px; }
```
